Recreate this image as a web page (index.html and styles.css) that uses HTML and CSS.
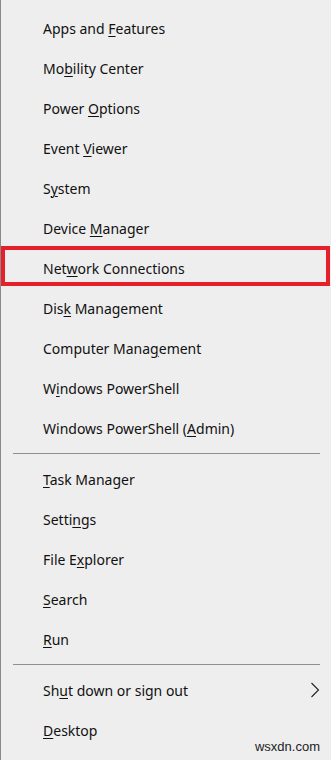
FILE: index.html
```html
<!DOCTYPE html>
<html>
<head>
<meta charset="utf-8">
<link rel="stylesheet" href="styles.css">
</head>
<body>
<div class="menu">
  <div class="group">
    <div class="item"><span>Apps and <u>F</u>eatures</span></div>
    <div class="item"><span>Mo<u>b</u>ility Center</span></div>
    <div class="item"><span>Power <u>O</u>ptions</span></div>
    <div class="item"><span>Event <u>V</u>iewer</span></div>
    <div class="item"><span>S<u>y</u>stem</span></div>
    <div class="item"><span>Device <u>M</u>anager</span></div>
    <div class="item highlight"><span>Net<u>w</u>ork Connections</span></div>
    <div class="item"><span>Dis<u>k</u> Management</span></div>
    <div class="item"><span>Computer Mana<u>g</u>ement</span></div>
    <div class="item"><span>W<u>i</u>ndows PowerShell</span></div>
    <div class="item"><span>Windows PowerShell (<u>A</u>dmin)</span></div>
  </div>
  <div class="sep"></div>
  <div class="group">
    <div class="item"><span><u>T</u>ask Manager</span></div>
    <div class="item"><span>Setti<u>n</u>gs</span></div>
    <div class="item"><span>File E<u>x</u>plorer</span></div>
    <div class="item"><span><u>S</u>earch</span></div>
    <div class="item"><span><u>R</u>un</span></div>
  </div>
  <div class="sep"></div>
  <div class="group">
    <div class="item submenu"><span>Sh<u>u</u>t down or sign out</span>
      <svg class="chev" width="10" height="16" viewBox="0 0 10 16"><path d="M1.5 1 L8.5 8 L1.5 15" fill="none" stroke="#222" stroke-width="1.1"/></svg>
    </div>
    <div class="item"><span><u>D</u>esktop</span></div>
  </div>
  <div class="watermark">wsxdn.com</div>
</div>
</body>
</html>
```
FILE: styles.css
```css
html, body {
  margin: 0;
  padding: 0;
  background: #eeeeee;
}
.menu {
  position: relative;
  width: 331px;
  height: 760px;
  box-sizing: border-box;
  border-left: 1px solid #8a8a8a;
  padding-top: 8px;
  background: #eeeeee;
  font-family: "Noto Sans", "Open Sans", sans-serif;
  font-size: 14px;
  color: #111;
}
.item {
  height: 40px;
  display: flex;
  align-items: center;
  padding-left: 42px;
  padding-right: 11px;
  box-sizing: border-box;
  white-space: nowrap;
}
.item u {
  text-decoration-thickness: 1px;
  text-underline-offset: 2px;
}
.highlight {
  position: relative;
}
.highlight::after {
  content: "";
  position: absolute;
  left: 0;
  right: 1px;
  top: -2px;
  bottom: 2px;
  border: 4px solid #e5202a;
}
.submenu {
  justify-content: space-between;
}
.chev {
  display: block;
}
.sep {
  height: 1px;
  background: #8f8f8f;
  margin: 5px 11px 5px 12px;
}
.watermark {
  position: absolute;
  right: 11px;
  bottom: 6px;
  font-family: "Liberation Sans", Arial, sans-serif;
  font-size: 13px;
  color: #222;
}
```
